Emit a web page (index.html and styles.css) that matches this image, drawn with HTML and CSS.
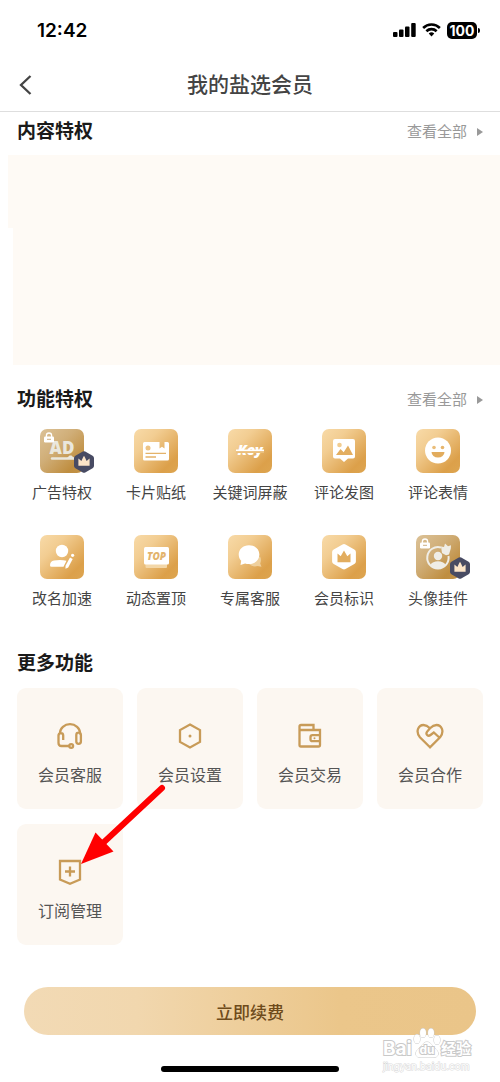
FILE: index.html
```html
<!DOCTYPE html>
<html lang="zh-CN">
<head>
<meta charset="utf-8">
<meta name="viewport" content="width=device-width, initial-scale=1">
<title>我的盐选会员</title>
<link rel="stylesheet" href="styles.css">
</head>
<body>
<svg class="defs" width="0" height="0" aria-hidden="true">
  <defs>
    <linearGradient id="gold" x1="0" y1="0" x2="1" y2="1">
      <stop offset="0" stop-color="#f8daa8"/><stop offset=".3" stop-color="#f2cd92"/><stop offset=".8" stop-color="#dca04a"/><stop offset="1" stop-color="#dda550"/>
    </linearGradient>
    <linearGradient id="dim" x1="0" y1="0" x2="1" y2="1">
      <stop offset="0" stop-color="#dcc297"/><stop offset=".4" stop-color="#d0ae78"/><stop offset=".8" stop-color="#bf8e40"/><stop offset="1" stop-color="#c29248"/>
    </linearGradient>
    <symbol id="lock" viewBox="0 0 10 11">
      <path d="M2.4 5V3.6a2.6 2.6 0 0 1 5.2 0V5" fill="none" stroke="#fff" stroke-width="1.3"/>
      <rect y="4.5" width="10" height="6" rx="1.2" fill="#fff"/>
      <path d="M3 7.3h4" stroke="#cdb083" stroke-width="1"/>
    </symbol>
    <symbol id="vip" viewBox="0 0 20 22">
      <path d="M8.8.6a2.4 2.4 0 0 1 2.4 0l7.4 4.2A2.6 2.6 0 0 1 20 7v8a2.6 2.6 0 0 1-1.4 2.2l-7.4 4.2a2.4 2.4 0 0 1-2.4 0l-7.4-4.2A2.6 2.6 0 0 1 0 15V7a2.6 2.6 0 0 1 1.4-2.2z" fill="#484b63"/>
      <path d="M4.4 7.6l3 2.3L9 6.4l1-1.7 1 1.7 1.6 3.5 3-2.3v7.2H4.4z" fill="#fbe4c8"/>
    </symbol>
  </defs>
</svg>

<div class="status">
  <time class="clock">12:42</time>
  <div class="indicators">
    <svg width="23" height="14" viewBox="0 0 23 14" aria-hidden="true"><rect y="9" width="4.5" height="5" rx="1"/><rect x="6" y="6.5" width="4.5" height="7.500" rx="1"/><rect x="12" y="3.500" width="4.500" height="10.500" rx="1"/><rect x="18.200" width="4.500" height="14" rx="1"/></svg>
    <svg width="19" height="14" viewBox="0 0 20 14" aria-hidden="true"><g fill="none" stroke="#000" stroke-width="2.700"><path d="M1.200 4.900a12.500 12.500 0 0 1 17.600 0M4.600 8.300a7.700 7.700 0 0 1 10.800 0"/></g><path d="M7.100 10.800a4.200 4.200 0 0 1 5.800 0L10 13.800z"/></svg>
    <span class="battery">100</span>
  </div>
</div>

<header class="nav">
  <button class="back" type="button" aria-label="返回"><svg width="13" height="20" viewBox="0 0 13 20" aria-hidden="true"><path d="M11.500 1L2 10l9.500 9" fill="none" stroke="#444" stroke-width="2.300"/></svg></button>
  <h1 class="title">我的盐选会员</h1>
</header>

<main>
  <section class="content">
    <div class="head"><h2>内容特权</h2><a class="all" href="#content">查看全部</a></div>
    <div class="blank"><div class="blank-top"></div><div class="blank-rest"></div></div>
  </section>

  <section class="features">
    <div class="head"><h2>功能特权</h2><a class="all" href="#features">查看全部</a></div>
    <div class="grid">
      <a class="item" href="#ad"><span class="tile"><svg class="icon" viewBox="0 0 44 44" aria-hidden="true">
        <rect width="44" height="44" rx="7" fill="url(#dim)"/>
        <text class="ad" x="22" y="25" text-anchor="middle">AD</text>
        <path d="M12 29.500h22" stroke="#eae7dd" stroke-width="2.400" stroke-linecap="round"/><path d="M27 29l2.500-2.500h2L34 29z" fill="#eae7dd"/>
        <use href="#lock" x="4" y="3" width="10" height="11"/></svg><svg class="badge" aria-hidden="true"><use href="#vip"/></svg></span>广告特权</a>
      <a class="item" href="#card"><span class="tile"><svg class="icon" viewBox="0 0 44 44" aria-hidden="true">
        <rect width="44" height="44" rx="7" fill="url(#gold)"/>
        <path d="M10.500 13h15v6.500l2.500-1.800 2.500 1.800V13h3a1.500 1.500 0 0 1 1.500 1.500V30a1.500 1.500 0 0 1-1.500 1.500h-23A1.500 1.500 0 0 1 9 30V14.500a1.500 1.500 0 0 1 1.500-1.500z" fill="#fff"/>
        <circle cx="14" cy="19" r="2.500" fill="#edc384"/><path d="M11.500 24.300H32M11.500 28H22" stroke="#e4b36a" stroke-width="1.300"/></svg></span>卡片贴纸</a>
      <a class="item" href="#keyword"><span class="tile"><svg class="icon" viewBox="0 0 44 44" aria-hidden="true">
        <rect width="44" height="44" rx="7" fill="url(#gold)"/>
        <text class="key" x="22" y="26" text-anchor="middle">Key</text>
        <path d="M8 22.800h28" stroke="#ebbf7c" stroke-width="2.400"/><path d="M8 21.300h28" stroke="#fff" stroke-width="1.600"/></svg></span>关键词屏蔽</a>
      <a class="item" href="#image"><span class="tile"><svg class="icon" viewBox="0 0 44 44" aria-hidden="true">
        <rect width="44" height="44" rx="7" fill="url(#gold)"/>
        <path d="M13 10h18a2 2 0 0 1 2 2v15.500a2 2 0 0 1-2 2h-5L22 33l-4-3.500h-5a2 2 0 0 1-2-2V12a2 2 0 0 1 2-2z" fill="#fff"/>
        <circle cx="17.500" cy="16" r="2.300" fill="#f1cd91"/><path d="M14 26l4.500-6 3.200 3.300 4.300-6.800 5 9.500z" fill="#e3ae60"/></svg></span>评论发图</a>
      <a class="item" href="#emoji"><span class="tile"><svg class="icon" viewBox="0 0 44 44" aria-hidden="true">
        <rect width="44" height="44" rx="7" fill="url(#gold)"/>
        <circle cx="22" cy="21.500" r="13" fill="#fff"/><circle cx="18" cy="18.500" r="1.800" fill="#eabd79"/><circle cx="26.500" cy="18.500" r="1.800" fill="#e6b56d"/><path d="M15.500 23h13a6.500 5.500 0 0 1-13 0z" fill="#e2ac5d"/></svg></span>评论表情</a>
      <a class="item" href="#rename"><span class="tile"><svg class="icon" viewBox="0 0 44 44" aria-hidden="true">
        <rect width="44" height="44" rx="7" fill="url(#gold)"/>
        <circle cx="22" cy="16" r="6.200" fill="#fff"/><path d="M14 25.500c4-.8 9-.8 12.500.3l-3 6H11.500a1.500 1.500 0 0 1-1.500-1.500c0-2.500 1.500-4.500 4-4.800z" fill="#fff"/>
        <path d="M30 22.500l2.700 1.500-4.500 8.500-2.700 1.200v-3z" fill="#fff"/><circle cx="32.600" cy="20.300" r="1.600" fill="#fff"/></svg></span>改名加速</a>
      <a class="item" href="#top"><span class="tile"><svg class="icon" viewBox="0 0 44 44" aria-hidden="true">
        <rect width="44" height="44" rx="7" fill="url(#gold)"/>
        <rect x="11.500" y="27" width="21.500" height="6" rx="1" fill="#f3d7a8"/><rect x="10" y="12" width="25" height="17.500" rx="1.500" fill="#fff"/>
        <text class="top" x="22.500" y="24.500" text-anchor="middle">TOP</text></svg></span>动态置顶</a>
      <a class="item" href="#service"><span class="tile"><svg class="icon" viewBox="0 0 44 44" aria-hidden="true">
        <rect width="44" height="44" rx="7" fill="url(#gold)"/>
        <path d="M32 21.500c1.500 2.500 1 5 .2 7l1.300 3.300-4-.7c-3 1-6 .2-8.500-2z" fill="#efd09d"/><path d="M21 10.200c6 0 10.400 4 10.400 9.400S27 29 21 29c-1.500 0-2.700-.2-3.900-.6L12.500 30l.7-4.200c-1.600-1.600-2.500-3.700-2.500-6.200 0-5.400 4.300-9.400 10.300-9.400z" fill="#fff"/></svg></span>专属客服</a>
      <a class="item" href="#mark"><span class="tile"><svg class="icon" viewBox="0 0 44 44" aria-hidden="true">
        <rect width="44" height="44" rx="7" fill="url(#gold)"/>
        <path d="M20.500 9.400a3 3 0 0 1 3 0l8.800 5a3 3 0 0 1 1.600 2.600v9.500a3 3 0 0 1-1.600 2.600l-8.800 5a3 3 0 0 1-3 0l-8.800-5a3 3 0 0 1-1.600-2.600V17a3 3 0 0 1 1.600-2.600z" fill="#fff"/>
        <path d="M15.500 18.500l3.200 2.800 3.300-5.800 3.300 5.800 3.200-2.800v8.700h-13z" fill="#e2ad5f"/></svg></span>会员标识</a>
      <a class="item" href="#avatar"><span class="tile"><svg class="icon" viewBox="0 0 44 44" aria-hidden="true">
        <rect width="44" height="44" rx="7" fill="url(#dim)"/>
        <path d="M25 12.500A10.700 10.700 0 1 0 32.500 21" fill="none" stroke="#efede6" stroke-width="2"/><circle cx="22" cy="21" r="4.200" fill="#efede6"/><path d="M14.500 30c1.800-5 13.200-5 15 0-3.500 4.500-11.500 4.500-15 0z" fill="#efede6"/>
        <path d="M25 11.500l3 .5 1-3.500 3 2.700 3-1-.2 3.300-1.800 6-3 .8-4-2.300z" fill="#efede6"/>
        <use href="#lock" x="4" y="3" width="10" height="11"/></svg><svg class="badge" aria-hidden="true"><use href="#vip"/></svg></span>头像挂件</a>
    </div>
  </section>

  <section class="more">
    <div class="head"><h2>更多功能</h2></div>
    <div class="cards">
      <a class="card" href="#support"><svg class="line" viewBox="0 0 28 28" aria-hidden="true"><path d="M4 12.500V11a10 8.800 0 0 1 20 0v1.500M2.500 12.500v8.500q0 3 3 3h7.500M7.200 18v-4.500a2.300 2.300 0 0 0-4.600 0M20.300 13a1.900 1.900 0 0 1 4.600 0v6.500a1.900 1.900 0 0 1-4.600 0z"/><circle cx="15.200" cy="24" r="1.900"/></svg>会员客服</a>
      <a class="card" href="#settings"><svg class="line" viewBox="0 0 28 28" aria-hidden="true"><path d="M14 2.500l10 5.600v11.800l-10 5.600-10-5.600V8.100z"/><circle class="dot" cx="14" cy="14" r="1.500"/></svg>会员设置</a>
      <a class="card" href="#orders"><svg class="line" viewBox="0 0 28 28" aria-hidden="true"><path d="M3.500 8V4.500q0-1.500 1.500-1.500h12.500v5M3.500 8H24v15q0 1.500-1.500 1.500H5q-1.500 0-1.500-1.500zM24 13.200h-7.500q-2 0-2 2v2q0 2 2 2H24"/><circle class="dot" cx="18.500" cy="16.200" r="1"/></svg>会员交易</a>
      <a class="card" href="#partners"><svg class="line" viewBox="0 0 28 28" aria-hidden="true"><path d="M14 25.300L3.900 15.200C-.8 9.500 2.500 3 7.500 3c2.600 0 4.400 1.100 6.500 3.200C16.100 4.100 17.900 3 20.500 3c5 0 8.300 6.500 3.600 12.200zM14 6.200l-3 3.600c-1.700 2.800 1.200 5 3.500 3.200l3.300-2.500 5.500 5"/></svg>会员合作</a>
      <a class="card" href="#subscriptions"><svg class="line" viewBox="0 0 28 28" aria-hidden="true"><path d="M4 3h20v18.500l-10 4.300-10-4.300zM14 8.500v10M9 13.500h10"/></svg>订阅管理</a>
      <svg class="arrow" width="160" height="190" viewBox="0 0 160 190" aria-hidden="true"><path d="M145 100L86 155" stroke="#f00" stroke-width="6" stroke-linecap="round"/><path d="M64 176l14.500-31.500 18 19z" fill="#f00"/></svg>
    </div>
  </section>
</main>

<footer class="footer">
  <button class="renew" type="button">立即续费</button>
  <div class="home"></div>
  <svg class="watermark" width="100" height="46" viewBox="0 0 100 46" aria-hidden="true">
    <g class="outlined">
      <text class="bai" x="2" y="28">Bai</text>
      <path d="M46 15c4 0 5 4 8 6.500 5 4 4 9-2 9H40c-6 0-7-5-2-9 3-2.500 4-6.500 8-6.500z"/>
      <ellipse cx="36" cy="12" rx="3" ry="4.500"/><ellipse cx="42" cy="6" rx="3" ry="4.500"/><ellipse cx="50" cy="6" rx="3" ry="4.500"/><ellipse cx="56" cy="13" rx="3" ry="4.500"/>
      <text class="du" x="46" y="27" text-anchor="middle">du</text>
      <text class="jy" x="60" y="27">经验</text>
      <text class="url" x="2" y="43">jingyan.baidu.com</text>
    </g>
  </svg>
</footer>
</body>
</html>
```
FILE: styles.css
```css
* { box-sizing: border-box; }
body {
  margin: 0;
  background: #fff;
  color: #444;
  font-family: Inter, "Noto Sans CJK SC", sans-serif;
}
h1, h2 { margin: 0; }
a { color: inherit; text-decoration: none; }
button { border: 0; font-family: inherit; cursor: pointer; }
svg { display: block; flex: none; }
.defs { position: absolute; }

.status {
  display: flex;
  justify-content: space-between;
  align-items: center;
  height: 58px;
  padding: 2px 20px 0 37px;
  color: #000;
}
.clock { font-size: 19px; font-weight: 600; }
.indicators { display: flex; align-items: center; gap: 6px; }
.battery {
  position: relative;
  width: 30px;
  border-radius: 5px;
  background: #000;
  color: #fff;
  font-size: 14px;
  line-height: 17px;
  font-weight: 700;
  text-align: center;
  margin-right: 3px;
}
.battery::after {
  content: "";
  position: absolute;
  right: -3px;
  top: 6px;
  width: 2px;
  height: 5px;
  border-radius: 0 2px 2px 0;
  background: #000;
}

.nav {
  display: grid;
  grid-template-columns: 50px 1fr 50px;
  align-items: center;
  height: 54px;
  border-bottom: 1px solid #dedede;
}
.back {
  display: flex;
  align-items: center;
  height: 44px;
  padding: 0 0 0 19px;
  background: none;
}
.title {
  font-size: 21px;
  line-height: 28px;
  font-weight: 500;
  text-align: center;
}

.head {
  display: flex;
  justify-content: space-between;
  align-items: center;
  padding: 0 17px;
}
.head h2 {
  color: #1a1a1a;
  font-size: 19px;
  line-height: 28px;
  font-weight: 700;
}
.all {
  display: flex;
  align-items: center;
  gap: 10px;
  color: #999;
  font-size: 15px;
  line-height: 20px;
}
.all::after {
  content: "";
  border-left: 6px solid #999;
  border-top: 4px solid transparent;
  border-bottom: 4px solid transparent;
}
.content { padding-top: 6px; }
.blank { padding-top: 9px; }
.blank-top { height: 73px; margin-left: 8px; background: #fefaf5; }
.blank-rest { height: 137px; margin-left: 13px; background: #fefaf5; }

.features { padding-top: 21px; }
.grid {
  display: grid;
  grid-template-columns: repeat(5, 1fr);
  row-gap: 32px;
  padding: 15px 15px 0;
}
.item {
  display: flex;
  flex-direction: column;
  align-items: center;
  gap: 10px;
  font-size: 15px;
  line-height: 20px;
  white-space: nowrap;
}
.tile { position: relative; }
.icon { width: 44px; height: 44px; }
.badge {
  position: absolute;
  right: -10px;
  bottom: 0;
  width: 20px;
  height: 22px;
}
.ad { font: 800 17px "Open Sans", sans-serif; fill: #eae7dd; }
.key { font: italic 800 14px "Open Sans", sans-serif; fill: #fff; }
.top { font: italic 800 10px "Open Sans", sans-serif; fill: #e3b36d; }

.more { padding-top: 41px; }
.cards {
  position: relative;
  display: grid;
  grid-template-columns: repeat(4, 1fr);
  gap: 15px 14px;
  padding: 10px 17px 0;
}
.card {
  display: flex;
  flex-direction: column;
  align-items: center;
  gap: 13px;
  padding: 34px 0 22px;
  border-radius: 9px;
  background: #fcf7f1;
  color: #555;
  font-size: 16px;
  line-height: 24px;
}
.line {
  width: 28px;
  height: 28px;
  fill: none;
  stroke: #c89b58;
  stroke-width: 2.3;
}
.dot { fill: #c89b58; stroke: none; }
.arrow {
  position: absolute;
  left: 17px;
  top: 10px;
  pointer-events: none;
}

.footer {
  position: relative;
  display: flex;
  flex-direction: column;
  align-items: center;
  gap: 31px;
  padding: 42px 24px 10px;
}
.renew {
  width: 100%;
  height: 48px;
  border-radius: 24px;
  background: linear-gradient(90deg, #f2dab5, #f1d7ae 25%, #ebc68a 70%, #eac589);
  color: #6e4b1b;
  font-size: 17px;
  font-weight: 500;
}
.home { width: 178px; height: 6px; border-radius: 3px; background: #000; }
.watermark {
  position: absolute;
  right: 19px;
  bottom: 9px;
  pointer-events: none;
}
.outlined { fill: #fff; stroke: #c9c9c9; stroke-width: 1; paint-order: stroke; }
.bai { font: 700 19px Inter, sans-serif; stroke-width: 2; }
.du { font: 700 12px Inter, sans-serif; stroke-width: 2; }
.jy { font: 700 15px "Noto Sans CJK SC", sans-serif; stroke-width: 2; }
.url { font: 400 10px Inter, sans-serif; stroke: #d8d8d8; stroke-width: 1; }
```
